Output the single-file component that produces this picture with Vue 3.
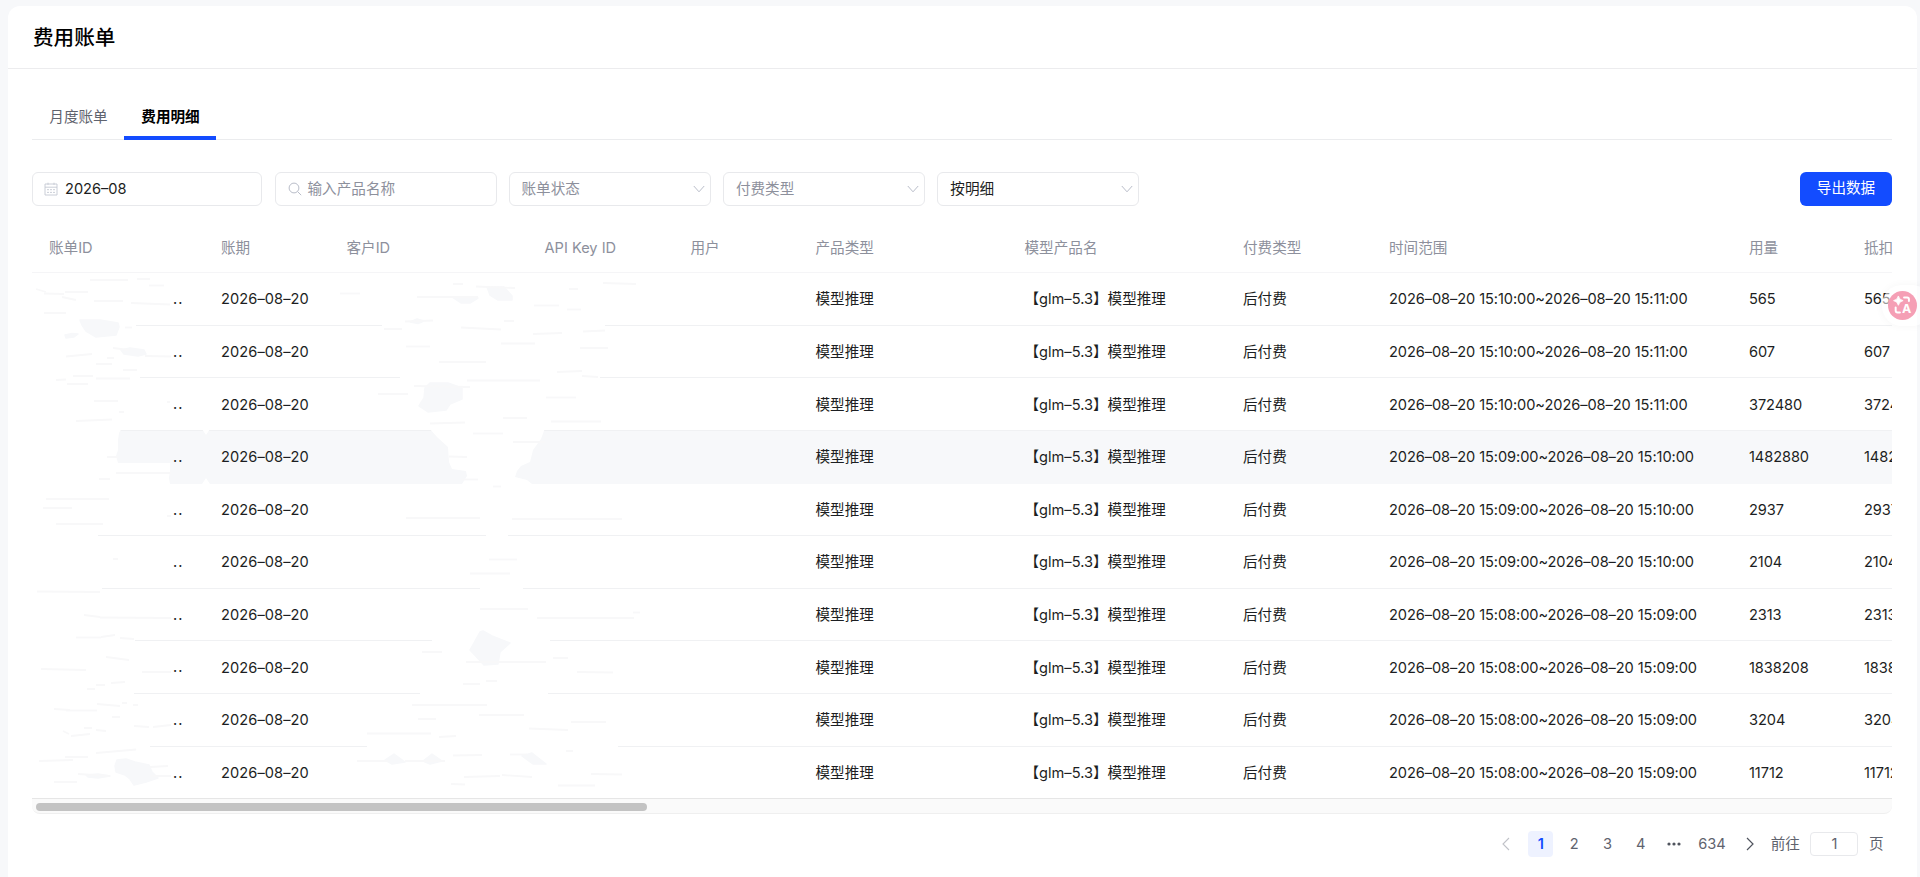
<script setup>
const headers = ['账单ID', '账期', '客户ID', 'API Key ID', '用户', '产品类型', '模型产品名', '付费类型', '时间范围', '用量', '抵扣']

const t10 = '2026–08–20 15:10:00~2026–08–20 15:11:00'
const t09 = '2026–08–20 15:09:00~2026–08–20 15:10:00'
const t08 = '2026–08–20 15:08:00~2026–08–20 15:09:00'
const rows = [
  { range: t10, usage: '565' },
  { range: t10, usage: '607' },
  { range: t10, usage: '372480' },
  { range: t09, usage: '1482880', hover: true },
  { range: t09, usage: '2937' },
  { range: t09, usage: '2104' },
  { range: t08, usage: '2313' },
  { range: t08, usage: '1838208' },
  { range: t08, usage: '3204' },
  { range: t08, usage: '11712' },
]

const selects = [
  { label: '账单状态', filled: false },
  { label: '付费类型', filled: false },
  { label: '按明细', filled: true },
]

// Blanked stretches of the row dividers: y, then x ranges
const blanks = [
  [325, 32, 136, 382, 605],
  [377.6, 32, 140, 400, 600],
  [535.5, 32, 98, 486, 508],
  [588.2, 32, 102, 480, 523],
  [640.8, 32, 135, 432, 550],
  [693.5, 32, 134, 420, 548],
  [746.1, 32, 150, 367, 618],
]

// Faint residual strokes: x1, y1, x2, y2
const streaks = [
  [90, 280, 128, 280], [137, 279, 150, 279], [149, 285.5, 164, 285.5], [36, 289, 46, 292], [44, 293.5, 64, 294], [65, 292, 88, 292],
  [62, 297, 76, 300], [94, 301, 123, 301], [131, 303, 170, 304.5], [44, 313, 66, 313], [125, 327.5, 132, 327.5],
  [66, 356.5, 92, 354], [107, 358, 114, 358], [96, 364, 112, 364], [123, 370, 137, 370], [73, 376, 93, 376], [56, 380, 66, 379.5],
  [67, 384, 88, 384], [96, 378.5, 130, 378.5], [94, 401, 118, 401], [76, 421, 112, 419.5], [113, 348, 129, 350], [145, 356, 171, 356.5],
  [167, 402, 170, 402], [119, 412, 124, 412], [107, 457, 118, 457], [116, 473, 171, 473], [99, 479, 110, 479],
  [46, 499, 109, 499], [43, 508, 72, 508], [56, 524, 103, 524], [167, 516, 171, 516], [113, 559, 118, 559],
  [37, 591.5, 100, 592], [84, 615, 100, 617], [100, 617.5, 171, 618], [76, 637.5, 101, 637.5], [101, 637, 115, 635], [120, 638, 134, 639],
  [106, 657, 129, 660], [41, 669, 86, 670], [142, 672, 171, 672], [111, 683, 125, 682], [96, 685, 105, 685], [87, 689, 95, 689],
  [54, 709, 70, 710], [66, 710.5, 97, 710.5], [97, 704, 120, 706], [122, 703, 127, 703], [133, 705, 138, 705], [112, 717, 120, 717],
  [84, 728, 92, 728], [96, 730, 106, 731], [63, 731, 69, 734], [71, 736, 90, 734], [134, 726, 149, 727], [153, 727, 171, 725],
  [96, 753, 136, 749.5], [65, 757, 88, 757], [39, 761, 73, 760], [78, 774, 110, 776], [54, 782, 77, 782], [150, 767, 168, 766], [150, 776, 171, 776],
  [340, 293.5, 360, 293.5], [417, 297, 478, 297], [453, 284, 463, 284], [476, 286.5, 515, 288], [603, 283, 636, 284], [569, 289, 578, 289],
  [534, 305.5, 559, 305.5], [567, 309.5, 581, 309.5], [405, 321.5, 433, 320.5], [504, 321, 514, 321], [384, 329, 402, 329],
  [461, 327.5, 501, 329.5], [533, 334, 562, 333], [583, 331.5, 605, 330.5], [406, 346.5, 430, 346.5], [501, 343.5, 535, 343.5],
  [580, 348, 608, 348], [439, 362, 486, 362], [557, 372, 582, 371], [582, 376, 598, 377], [467, 380.5, 540, 380.5],
  [414, 386, 470, 387], [378, 394, 408, 394], [546, 397.5, 576, 397.5], [430, 423.5, 465, 422.5], [503, 418, 527, 418],
  [551, 421.5, 601, 421.5], [473, 433.5, 503, 433.5], [513, 442, 545, 442], [449, 456.5, 467, 457], [462, 479.5, 478, 479.5], [493, 486.5, 501, 486.5],
  [406, 518, 480, 518], [512, 519, 622, 519], [489, 559.5, 517, 559.5], [470, 573.5, 510, 573.5], [480, 609, 528, 609],
  [537, 618, 634, 618], [633, 612.5, 640, 612.5], [422, 652, 442, 652], [466, 662, 546, 662], [553, 658, 568, 658],
  [577, 672, 613, 672.5], [463, 684, 480, 684], [486, 681, 497, 681], [412, 705, 487, 705], [479, 715, 524, 715],
  [418, 719, 436, 719], [571, 722, 606, 722], [529, 728.5, 568, 730], [367, 733.5, 431, 733.5], [439, 737, 456, 736],
  [357, 761, 388, 761], [405, 761, 445, 761], [453, 755.5, 482, 755], [510, 754.5, 527, 754.5], [566, 751, 573, 751],
  [464, 777, 500, 776], [502, 775, 532, 777], [591, 774, 622, 774.5], [558, 785.5, 595, 785.5], [451, 784, 465, 784.5],
]

const blobs = [
  '80,320 100,320 118,323 119,327 116,335 96,337 86,331 82,325',
  '65,335 72,333.5 78,334 74,337 66,338',
  '121,350 130,348 144,350 146,354 138,356 124,354',
  '487,287 504,287 512,296 512,300 498,300 490,295',
  '452,297 478,298 470,303 461,303',
  '410,322 417,319 424,321 418,323.5',
  '430,383 448,383 462,388 462,399 450,404 446,410 428,412 419,406 424,398 425,388',
  '480,632 483,631 492,636 510,643 500,652 498,664 484,665 470,650',
  '115,766 117,760 126,759 135,762 149,765 152,772 158,778 146,782 134,785 130,779 125,775 116,772',
  '86,775 98,774 110,776 98,778 88,777',
  '385,760 394,754 405,762 392,764',
  '423,761 432,754 442,761 430,764',
  '522,756 532,753 546,764 533,764',
]
</script>

<template>
  <div class="page">
    <main class="card">
      <header class="head"><h1>费用账单</h1></header>
      <nav class="tabs">
        <div class="tab">月度账单</div>
        <div class="tab active">费用明细</div>
      </nav>

      <section class="filters">
        <div class="field date">
          <svg class="ico" width="14" height="14" viewBox="0 0 14 14" fill="none" stroke="#c4c8d2" stroke-width="0.9">
            <path d="M1 2h12v11H1zM1 5.2h12M4 .7v2.2M10 .7v2.2" />
            <path d="M3 7.7h2m1 0h2m1 0h2M3 10.4h2m1 0h2m1 0h2" />
          </svg>
          <span class="dark">2026–08</span>
        </div>
        <div class="field search">
          <svg class="ico" width="14" height="14" viewBox="0 0 14 14" fill="none" stroke="#b9bdc9" stroke-width="1">
            <circle cx="6" cy="6" r="4.9" /><path d="M9.6 9.6l3.6 3.6" />
          </svg>
          <span>输入产品名称</span>
        </div>
        <div v-for="s in selects" :key="s.label" class="field select">
          <span :class="{ dark: s.filled }">{{ s.label }}</span>
          <svg width="12" height="8" viewBox="0 0 12 8" fill="none" stroke="#b9bdc9" stroke-width="1"><path d="M.8 1L6 6.8 11.2 1" /></svg>
        </div>
        <button class="export">导出数据</button>
      </section>

      <section class="table">
        <div class="row header"><div v-for="h in headers" :key="h" class="cell">{{ h }}</div></div>
        <div v-for="(r, i) in rows" :key="i" class="row" :class="{ hover: r.hover }">
          <div class="cell"></div>
          <div class="cell day">2026–08–20</div>
          <div class="cell"></div>
          <div class="cell"></div>
          <div class="cell"></div>
          <div class="cell">模型推理</div>
          <div class="cell">【glm–5.3】模型推理</div>
          <div class="cell">后付费</div>
          <div class="cell range">{{ r.range }}</div>
          <div class="cell range">{{ r.usage }}</div>
          <div class="cell range">{{ r.usage }}</div>
        </div>
        <svg class="veil" width="668" height="576" viewBox="32 222 668 576">
          <g fill="#fff">
            <template v-for="b in blanks" :key="b[0]">
              <rect :x="b[1]" :y="b[0] - 2" :width="b[2] - b[1]" height="4" />
              <rect :x="b[3]" :y="b[0] - 2" :width="b[4] - b[3]" height="4" />
            </template>
            <path d="M32 428H122L119 433L118 440V450L116 456L118 463H170V471L169 478L170 484H32z" />
            <path d="M202 429h8l-4 6zM202 484h8l-4-6z" />
            <path d="M429 428L437 437L448 447L449 462L452 469L466 471L467 476L462 484H532L527 480L515 477L517 471L521 466L530 462L533 450L541 439L545 428z" />
          </g>
          <polygon v-for="p in blobs" :key="p" :points="p" fill="#f7f8fa" stroke="#f7f8fa" stroke-width="1.5" stroke-linejoin="round" />
          <line v-for="(s, i) in streaks" :key="i" :x1="s[0]" :y1="s[1]" :x2="s[2]" :y2="s[3]" stroke="#f8f8f9" stroke-width="1.8" />
        </svg>
        <div class="dots"><span v-for="n in 10" :key="n">..</span></div>
      </section>
      <div class="scroll"><div class="thumb"></div></div>

      <footer class="pager">
        <svg class="arrow prev" width="8" height="14" viewBox="0 0 8 14" fill="none" stroke="#c0c2c8" stroke-width="1.1"><path d="M7 1L1 7l6 6" /></svg>
        <span class="pg on">1</span>
        <span class="pg">2</span>
        <span class="pg">3</span>
        <span class="pg">4</span>
        <span class="pg"><svg width="14" height="4" viewBox="0 0 14 4" fill="#50545e"><circle cx="2" cy="2" r="1.6" /><circle cx="7" cy="2" r="1.6" /><circle cx="12" cy="2" r="1.6" /></svg></span>
        <span class="pg wide">634</span>
        <svg class="arrow next" width="8" height="14" viewBox="0 0 8 14" fill="none" stroke="#50545e" stroke-width="1.2"><path d="M1 1l6 6-6 6" /></svg>
        <span class="go">前往</span>
        <span class="jump">1</span>
        <span class="go">页</span>
      </footer>
    </main>

    <div class="fab">
      <svg width="29" height="29" viewBox="0 0 28 28">
        <circle cx="14" cy="14" r="14" fill="#f59fb5" />
        <path d="M10 4.800Q10.700 8.600 14.600 9.300Q10.700 10 10 13.800Q9.300 10 5.400 9.300Q9.300 8.600 10 4.800z" fill="#fff" stroke="#fff" stroke-width="0.8" />
        <g fill="none" stroke="#fff" stroke-width="1.900" stroke-linecap="round"><path d="M15.500 6.300h3q1.700 0 1.700 1.700v1.600" /><path d="M7.400 15.800v3q0 1.900 1.900 1.900h2.200" /></g>
        <text x="18" y="21.200" text-anchor="middle" font-size="12" font-weight="700" fill="#fff">A</text>
      </svg>
    </div>
  </div>
</template>

<style>
body { margin: 0; background: #f7f8fa; overflow: hidden; }
</style>

<style scoped>
* { box-sizing: border-box; }
.page {
  position: relative;
  height: 877px;
  padding: 6px 3px 0 8px;
  overflow: hidden;
  background: #f7f8fa;
  font-family: Inter, "Noto Sans CJK SC", sans-serif;
  font-size: 14.6px;
  color: #1c1e22;
}
.card { height: 871px; background: #fff; border-radius: 12px 12px 0 0; }
.head { height: 63px; padding-left: 25px; display: flex; align-items: center; border-bottom: 1px solid #ececee; }
h1 { margin: 1px 0 0; font-size: 20.600px; line-height: 30px; font-weight: 500; color: #000; }
.tabs { height: 44px; margin: 27px 25px 0 24px; display: flex; border-bottom: 1px solid #ebecee; }
.tab { width: 92px; height: 44px; line-height: 42px; padding-left: 1px; text-align: center; color: #5f636e; }
.active { color: #000; font-weight: 700; border-bottom: 4px solid #134cff; }
.filters { margin: 32px 25px 0 24px; height: 34px; display: flex; align-items: center; }
.field {
  height: 34px; border: 1px solid #e8e9ec; border-radius: 6px; display: flex; align-items: center;
  color: #8d909c; flex: none; line-height: 20px;
}
.dark { color: #1c1e22; }
.ico { margin-right: 7px; }
.date { width: 230px; padding-left: 11px; margin-right: 12.500px; }
.search { width: 222px; padding-left: 12px; margin-right: 12px; }
.search .ico { margin-right: 6px; }
.select { width: 202px; padding: 0 5px 0 12px; margin-right: 12.400px; justify-content: space-between; }
.export {
  margin-left: auto; width: 92px; height: 34px; border: 0; padding: 0 0 2px; border-radius: 6px; background: #134cff; color: #fff;
  font: inherit; line-height: 20px;
}
.table { position: relative; margin: 16px 25px 0 24px; height: 576px; overflow: hidden; }
.row {
  width: 2000px; height: 52.63px; display: grid; align-items: center; border-bottom: 1px solid #f0f1f3;
  grid-template-columns: 172px 125.5px 198px 146px 125px 209px 218.500px 146px 360px 115px 1fr;
}
.row.header { height: 51px; color: #8d909c; border-bottom-color: #f5f5f7; }
.row.hover { background: #f7f8fa; border-bottom-color: #f7f8fa; }
.cell { padding: 1px 0 0 17px; white-space: nowrap; line-height: 20px; }
.day { letter-spacing: 0.09px; }
.range { letter-spacing: -0.08px; }
.veil { position: absolute; left: 0; top: 0; }
.dots { position: absolute; left: 141px; top: 51px; display: flex; flex-direction: column; }
.dots span { height: 52.63px; line-height: 53px; letter-spacing: 1px; }
.scroll { height: 16px; margin: 0 25px 0 24px; padding: 4px 4px; background: #fafafa; border-top: 1px solid #e6e6e6; border-bottom: 1px solid #efefef; border-radius: 0 0 8px 8px; }
.thumb { width: 611px; height: 8px; border-radius: 4px; background: #c3c3c3; }
.pager { height: 26px; margin: 17px 33.500px 0 0; display: flex; align-items: center; justify-content: flex-end; color: #5f636e; line-height: 20px; }
.pg { width: 25px; height: 26px; margin-right: 8.300px; display: flex; align-items: center; justify-content: center; border-radius: 4px; }
.pg.on { background: #eef2ff; color: #134cff; font-weight: 600; }
.pg.wide { width: 34px; }
.prev { margin-right: 18px; }
.next { margin: 0 16.500px 0 9px; }
.jump { width: 48px; height: 24px; margin: 0 10.500px; display: flex; align-items: center; justify-content: center; border: 1px solid #e8e9ec; border-radius: 4px; }
.fab { position: absolute; left: 1882px; top: 285px; width: 50px; height: 41px; padding: 6px; border-radius: 20px; background: rgba(255, 255, 255, 0.55); box-shadow: 0 0 8px rgba(0, 0, 0, 0.04); }
.fab svg { display: block; }
</style>
